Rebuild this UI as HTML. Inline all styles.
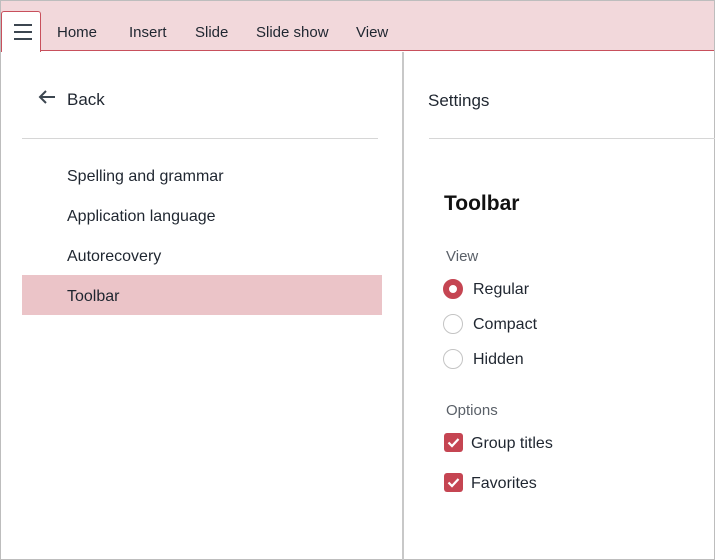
<!DOCTYPE html>
<html><head><style>
*{margin:0;padding:0;box-sizing:border-box}
body{width:715px;height:560px;overflow:hidden;background:#fff;font-family:"Liberation Sans",sans-serif;color:#1f2630;position:relative}
.frame{position:absolute;left:0;top:0;width:715px;height:560px;border:1px solid #bdbdbd}
.top{position:absolute;left:1px;top:1px;width:713px;height:50px;background:#f2d8db;border-bottom:1px solid #c8505c}
.ham{position:absolute;left:1px;top:11px;width:40px;height:41px;background:#fff;border:1px solid #c8505c;border-bottom:none;border-radius:3px 3px 0 0}
.ham i{position:absolute;left:12px;width:18px;height:2px;background:#3c4650}
.tab{position:absolute;top:24px;font-size:15px;color:#1f2630}
.t{position:absolute;font-size:16px}
.div{position:absolute;left:402px;top:52px;width:2px;height:508px;background:#c8c8c8}
.hl{position:absolute;height:1px;background:#d6d6d6}
.rad{position:absolute;left:443px;width:20px;height:20px;border-radius:50%;border:1.5px solid #c4c4c4}
.chk{position:absolute;left:444px;width:19px;height:19px;border-radius:3px;background:#c54552}
</style></head><body>
<div class="frame"></div>
<div class="top"></div>
<div class="ham"><i style="top:12px"></i><i style="top:19px"></i><i style="top:26px"></i></div>
<div class="tab" style="left:57px">Home</div>
<div class="tab" style="left:129px">Insert</div>
<div class="tab" style="left:195px">Slide</div>
<div class="tab" style="left:256px">Slide show</div>
<div class="tab" style="left:356px">View</div>
<svg style="position:absolute;left:37px;top:89px" width="20" height="16" viewBox="0 0 20 16"><path d="M18 8H3M9 2L3 8l6 6" fill="none" stroke="#3c4650" stroke-width="2"/></svg>
<div class="t" style="left:67px;top:90px;font-size:17px">Back</div>
<div class="hl" style="left:22px;top:138px;width:356px"></div>
<div class="t" style="left:67px;top:168px">Spelling and grammar</div>
<div class="t" style="left:67px;top:208px">Application language</div>
<div class="t" style="left:67px;top:248px">Autorecovery</div>
<div style="position:absolute;left:22px;top:275px;width:360px;height:40px;background:#ebc4c8"></div>
<div class="t" style="left:67px;top:288px">Toolbar</div>
<div class="div"></div>
<div class="t" style="left:428px;top:91px;font-size:17px">Settings</div>
<div class="hl" style="left:429px;top:138px;width:286px"></div>
<div class="t" style="left:444px;top:192px;font-size:21px;font-weight:bold;color:#111">Toolbar</div>
<div class="t" style="left:446px;top:248px;font-size:15px;color:#5a6068">View</div>
<div class="rad" style="top:279px;border:6px solid #c54552"></div>
<div class="t" style="left:473px;top:281px">Regular</div>
<div class="rad" style="top:314px"></div>
<div class="t" style="left:473px;top:316px">Compact</div>
<div class="rad" style="top:349px"></div>
<div class="t" style="left:473px;top:351px">Hidden</div>
<div class="t" style="left:446px;top:402px;font-size:15px;color:#5a6068">Options</div>
<div class="chk" style="top:433px"><svg width="19" height="19"><path d="M4.5 9.5l3.5 3.5 6.5-7" fill="none" stroke="#fff" stroke-width="2.2"/></svg></div>
<div class="t" style="left:471px;top:435px">Group titles</div>
<div class="chk" style="top:473px"><svg width="19" height="19"><path d="M4.5 9.5l3.5 3.5 6.5-7" fill="none" stroke="#fff" stroke-width="2.2"/></svg></div>
<div class="t" style="left:471px;top:475px">Favorites</div>
</body></html>
